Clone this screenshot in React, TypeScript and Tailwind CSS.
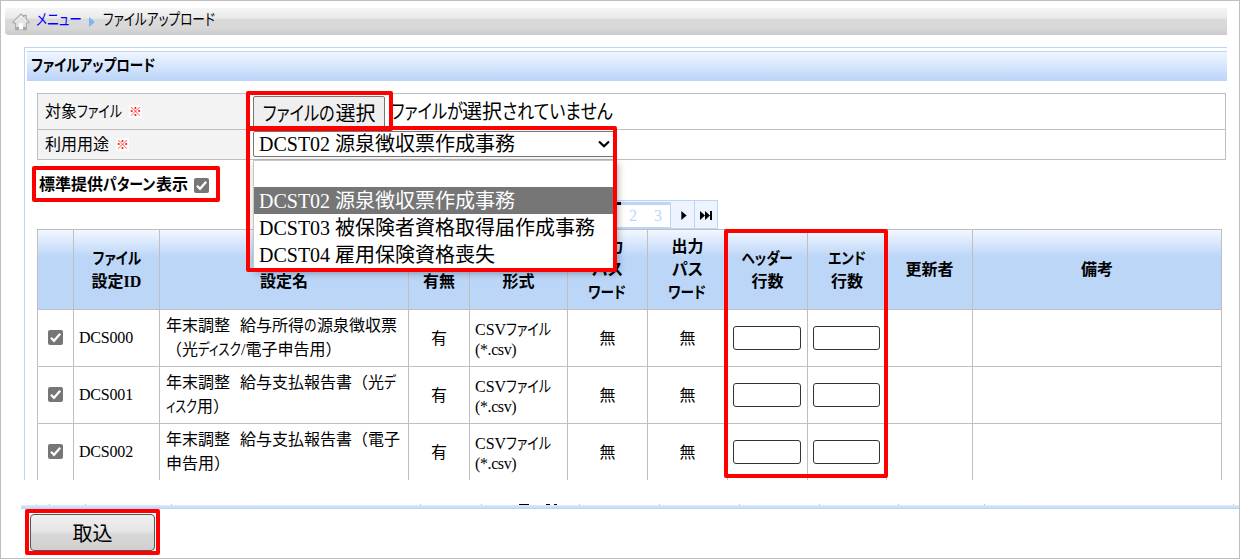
import type { ReactNode } from "react";

type FileSetting = {
  id: string;
  name: [ReactNode, ReactNode];
};

const columns = [
  { width: "w-[36px]", lines: [""] },
  { width: "w-[86px]", lines: ["ファイル", "設定ID"] },
  { width: "w-[249px]", lines: ["\u00a0", "設定名"] },
  { width: "w-[61px]", lines: ["\u00a0", "有無"] },
  { width: "w-[98px]", lines: ["\u00a0", "形式"] },
  { width: "w-[80px]", lines: ["入力", "パス", "ワード"] },
  { width: "w-[80px]", lines: ["出力", "パス", "ワード"] },
  { width: "w-[80px]", lines: ["ヘッダー", "行数"] },
  { width: "w-[79px]", lines: ["エンド", "行数"] },
  { width: "w-[86px]", lines: ["更新者"] },
  { width: "w-[249px]", lines: ["備考"] },
];

const options = ["", "DCST02 源泉徴収票作成事務", "DCST03 被保険者資格取得届作成事務", "DCST04 雇用保険資格喪失"];

// Condensed run of kana; the width is the advance left for the text after it
function Kana({ width, scale = "scale-x-[0.81]", children }: { width: string; scale?: string; children: string }) {
  return (
    <span className={`inline-block whitespace-nowrap ${width}`}>
      <span className={`inline-block origin-left [font-feature-settings:'palt'] ${scale}`}>{children}</span>
    </span>
  );
}

const settings: FileSetting[] = [
  {
    id: "DCS000",
    name: [
      <>年末調整<span className="mr-2.5" />給与所得<Kana width="w-[13px]">の</Kana>源泉徴収票</>,
      <>（光<Kana width="w-[43px]" scale="scale-x-[0.78]">ディスク</Kana>/電子申告用）</>,
    ],
  },
  {
    id: "DCS001",
    name: [
      <>年末調整<span className="mr-2.5" />給与支払報告書（光<Kana width="w-[13px]">デ</Kana></>,
      <><Kana width="w-[31px]" scale="scale-x-[0.75]">ィスク</Kana>用）</>,
    ],
  },
  {
    id: "DCS002",
    name: [<>年末調整<span className="mr-2.5" />給与支払報告書（電子</>, <>申告用）</>],
  },
];

function CheckBox() {
  return (
    <svg viewBox="0 0 15 15" className="h-[15px] w-[15px] shrink-0">
      <rect width="15" height="15" rx="2" fill="#767676" />
      <path d="M3 7.8 6 10.8 12.2 3.8" fill="none" stroke="#fff" strokeWidth="2.2" />
    </svg>
  );
}

function HomeIcon() {
  return (
    <svg viewBox="0 0 18 18" className="h-[18px] w-[18px]">
      <path d="M9 1 .8 9.2l.6.8h2.2v6.6h10.8V10h2.2l.6-.8-3-3V2.4h-2.4v1.4Z" fill="#e4e4e4" stroke="#ababab" strokeWidth="1.2" />
      <path d="M9 2.8 3.2 8.6M9 2.8l5.8 5.8" stroke="#f8f8f8" fill="none" />
      <path d="M7 10.2h4v6.2H7Z" fill="#fff" />
      <path d="M4.2 15.2H7M11 15.2h2.8" stroke="#a5a5a5" strokeWidth="2.4" />
    </svg>
  );
}

function Required() {
  return <span className="flex h-[13px] w-[13px] items-center justify-center bg-white text-[13px] text-[#ff2020]">※</span>;
}

function FormRow({ label, height, children }: { label: ReactNode; height: string; children: ReactNode }) {
  return (
    <div className={`flex border-b border-[#bfbfbf] ${height}`}>
      <div className="flex w-[210px] items-center gap-[7px] bg-[#f3f3f3] pl-[7px]">
        <span>{label}</span>
        <Required />
      </div>
      <div className="flex flex-1 items-start pl-[5px] text-[20px]">{children}</div>
    </div>
  );
}

function Cell({ width, className = "", children }: { width: string; className?: string; children?: ReactNode }) {
  return <div className={`flex shrink-0 items-center border-r border-[#bfbfbf] ${width} ${className}`}>{children}</div>;
}

function SettingRow({ row, last }: { row: FileSetting; last: boolean }) {
  return (
    <div className={`flex h-[57px] border-b ${last ? "border-transparent" : "border-[#bfbfbf]"}`}>
      <Cell width="w-[36px]" className="pb-px pl-2.5">
        <CheckBox />
      </Cell>
      <Cell width="w-[86px]" className="pl-[5px] tracking-[-0.2px]">{row.id}</Cell>
      <Cell width="w-[249px]" className="pl-1.5">
        <div className="leading-6 whitespace-nowrap [font-feature-settings:normal]">
          <div>{row.name[0]}</div>
          <div>{row.name[1]}</div>
        </div>
      </Cell>
      <Cell width="w-[61px]" className="justify-center pt-px">有</Cell>
      <Cell width="w-[98px]" className="pl-[5px]">
        <div className="mt-[3px] leading-5">
          <div className="whitespace-nowrap">CSV<Kana width="w-[43px]">ファイル</Kana></div>
          <div className="tracking-[-0.4px]">(*.csv)</div>
        </div>
      </Cell>
      <Cell width="w-[80px]" className="justify-center pt-px">無</Cell>
      <Cell width="w-[80px]" className="justify-center pt-px">無</Cell>
      <Cell width="w-[80px]" className="pl-[5px]">
        <div className="h-6 w-[68px] rounded-[3px] border border-[#333] bg-white" />
      </Cell>
      <Cell width="w-[79px]" className="pl-[5px]">
        <div className="h-6 w-[67px] rounded-[3px] border border-[#333] bg-white" />
      </Cell>
      <Cell width="w-[86px]" />
      <Cell width="w-[249px]" />
    </div>
  );
}

function Highlight({ className }: { className: string }) {
  return <div className={`pointer-events-none absolute rounded-[2px] border-4 border-[#ff0000] ${className}`} />;
}

function UsageMenu() {
  return (
    <div className="absolute left-[252px] top-[159px] h-[109px] w-[361px] border border-[#c8c8c8] bg-white text-[20px] shadow-[3px_3px_8px_rgba(0,0,0,0.4)]">
      {options.map((option, i) => (
        <div
          key={i}
          className={`pl-[5px] leading-[29px] whitespace-nowrap ${i === 0 ? "h-[26px]" : "h-[27px]"} ${i === 1 ? "bg-[#767676] text-white" : ""}`}
        >
          {option}
        </div>
      ))}
    </div>
  );
}

export default function App() {
  return (
    <div className="relative h-[559px] w-[1240px] overflow-hidden border border-[#bfbfbf] bg-white pt-[7px] font-['Liberation_Serif','Noto_Sans_CJK_JP',serif] text-[16px] leading-6 text-black [font-feature-settings:'palt']">
      <nav className="ml-1 flex h-[27px] w-[1222px] items-center rounded-l-[4px] bg-[linear-gradient(#f5f5f5,#eaeaea_38%,#dadada_40%,#d8d8d8_75%,#cacaca)] pl-[7px]">
        <HomeIcon />
        <span className="mb-1 ml-1.5 text-[#0000ff]">
          <Kana width="w-[46px]" scale="scale-x-[0.79]">メニュー</Kana>
        </span>
        <span className="mt-px ml-[7px] border-y-[5px] border-l-[6px] border-y-transparent border-l-[#80b4f0]" />
        <span className="mb-1 ml-2">
          <Kana width="w-[113px]" scale="scale-x-[0.79]">ファイルアップロード</Kana>
        </span>
      </nav>

      <main className="mt-3 ml-[23px] h-[433px] w-[1203px] overflow-hidden border-t border-l border-[#bcd4f5] pt-[3px] pl-0.5">
        <h1 className="h-[30px] border-t border-[#bcd4f5] bg-linear-to-b from-[#f0f6ff] to-[#bad4f8] pl-1 leading-[28px] font-bold">
          <span className="inline-block origin-left scale-x-[0.85]">ファイルアップロード</span>
        </h1>

        <section className="mt-3 ml-2.5 w-[1189px] border-x border-t border-[#bfbfbf]">
          <FormRow label={<>対象<Kana width="w-[45px]">ファイル</Kana></>} height="h-[36px]">
            <button className="mt-0.5 h-[35px] w-[132px] rounded-[2px] border border-[#767676] bg-[#efefef] whitespace-nowrap">
              <Kana width="w-[73px]">ファイルの</Kana>選択
            </button>
            <span className="ml-[6px] leading-[36px] whitespace-nowrap">
              <Kana width="w-[71px]">ファイルが</Kana>選択<Kana width="w-[111px]" scale="scale-x-[0.85]">されていません</Kana>
            </span>
          </FormRow>
          <FormRow label="利用用途" height="h-[30px]">
            <div className="mt-px flex h-[26px] w-[362px] items-center justify-between rounded-[2px] border border-[#767676] pr-0.5 pl-[5px]">
              <span>{options[1]}</span>
              <svg viewBox="0 0 12 8" className="mr-0.5 h-2 w-3">
                <path d="m1 1.5 5 4.8L11 1.5" fill="none" stroke="#000" strokeWidth="2.2" />
              </svg>
            </div>
          </FormRow>
        </section>

        <div className="mt-[13px] ml-3 flex h-[27px] items-start font-bold">
          <span className="w-[151px] whitespace-nowrap">標準提供<Kana width="w-[53px]" scale="scale-x-[0.87]">パターン</Kana>表示</span>
          <span className="mt-[5px] ml-1"><CheckBox /></span>
        </div>

        <div className="ml-[560px] flex h-[29px] w-[131px] border border-[#bcd6f8] bg-[#edf4ff] text-[16px] text-[#bcd6f8]">
          <div className="mt-px flex h-[26px] w-[83px] items-start border border-t-0 border-[#bcd6f8] bg-white">
            <div className="h-[3px] w-[32px] bg-black" />
            <div className="flex h-full flex-1 items-center justify-end gap-[17px] border-t-3 border-[#bcd6f8] pr-2">
              <span>2</span>
              <span>3</span>
            </div>
          </div>
          <div className="ml-0.5 flex w-[22px] items-center justify-center border-r border-[#bcd6f8]">
            <svg viewBox="0 0 6 10" className="mt-0.5 h-[9px] w-1.5"><path d="M0 0 6 5 0 10Z" /></svg>
          </div>
          <div className="flex flex-1 items-center justify-center">
            <svg viewBox="0 0 12 9" className="mt-0.5 h-[9px] w-3"><path d="M0 0 5 4.5 0 9ZM5 0l5 4.5L5 9ZM10 0h2v9h-2Z" /></svg>
          </div>
        </div>

        <section className="ml-2.5 w-[1185px] border-t border-l border-[#bfbfbf]">
          <div className="flex h-[80px] border-b border-[#bfbfbf] bg-[linear-gradient(#f2f7ff,#bcd6f8_34%)] text-center leading-[23px] font-bold">
            {columns.map((column, i) => (
              <Cell key={i} width={column.width} className="justify-center">
                <div className="whitespace-nowrap">
                  {column.lines.map((line, j) => (
                    <div key={j} className={/^[ァ-ー]{3,}$/.test(line) ? "-mx-2 scale-x-[0.85]" : ""}>{line}</div>
                  ))}
                </div>
              </Cell>
            ))}
          </div>
          {settings.map((row, i) => <SettingRow key={row.id} row={row} last={i === settings.length - 1} />)}
        </section>
      </main>

      <div className="mt-6 ml-[35px] flex h-px border-l border-[#bcd4f5]">
        {columns.map((column, i) => (
          <div key={i} className={`flex shrink-0 border-r border-[#bfbfbf] ${i === 0 ? "w-[13px]" : columns[i - 1].width}`}>
            {i === 5 && <><i className="ml-[37px] w-2.5 bg-black" /><i className="ml-[17px] w-1 bg-black" /><i className="ml-1 w-[3px] bg-black" /></>}
          </div>
        ))}
        <div className="w-[249px] border-r border-[#bfbfbf]" />
      </div>
      <footer className="ml-5">
        <div className="h-1 bg-linear-to-b from-[#e0ebfc] to-[#b8d3f6]" />
        <button className="mt-[5px] ml-[9px] h-[37px] w-[125px] rounded-[4px] border border-[#555] bg-[linear-gradient(#f0f0f0,#e5e5e5_45%,#d8d8d8_55%,#d0d0d0)] pt-0.5 text-[20px]">
          取込
        </button>
      </footer>

      <UsageMenu />
      <Highlight className="top-[90px] left-[245px] h-[40px] w-[147px]" />
      <Highlight className="top-[125px] left-[245px] h-[146px] w-[371px]" />
      <Highlight className="top-[165px] left-[31px] h-[36px] w-[188px]" />
      <Highlight className="top-[228px] left-[723px] h-[249px] w-[164px]" />
      <Highlight className="top-[508px] left-[24px] h-[46px] w-[135px]" />
    </div>
  );
}
